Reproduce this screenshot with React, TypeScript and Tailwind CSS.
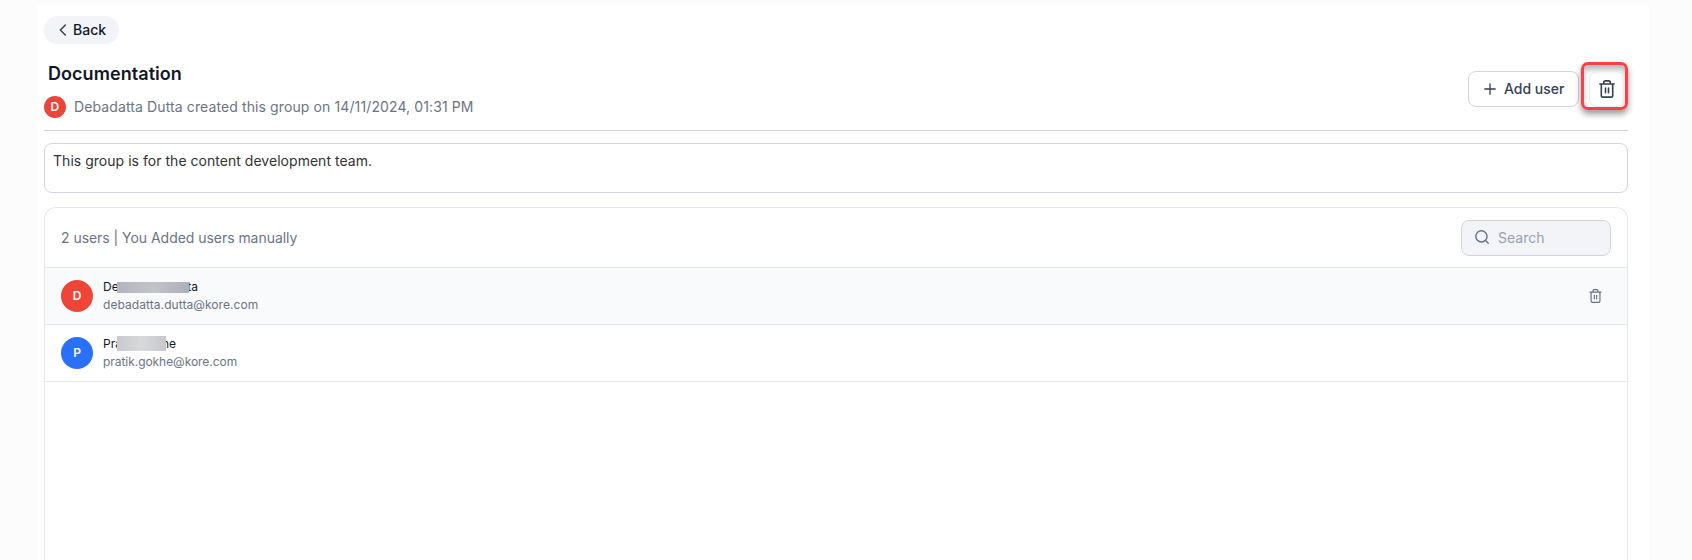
import React from "react";

function Trash({ className }: { className: string }) {
  return (
    <svg viewBox="0 0 16 18" fill="none" stroke="currentColor" strokeLinecap="round" strokeLinejoin="round" className={className}>
      <path d="M0.9 4H15.1M4.7 3.8V2.6Q4.7 0.9 6.4 0.9H9.6Q11.3 0.9 11.3 2.6V3.8M2.3 4V15.4Q2.3 17.1 4 17.1H12Q13.7 17.1 13.7 15.4V4M6.5 8V12.8M9.5 8V12.8" />
    </svg>
  );
}

type User = {
  initial: string;
  color: string;
  head: string;
  tail: string;
  mask: string;
  email: string;
  tracking: string;
  active: boolean;
};

const users: User[] = [
  {
    initial: "D",
    color: "bg-[#f04438]",
    head: "De",
    tail: "ta",
    mask: "left-[14px] top-[4px] w-[72px] h-[11px] bg-linear-to-r from-[#b3b5be] via-[#c3c4c8] to-[#adafb9]",
    email: "debadatta.dutta@kore.com",
    tracking: "tracking-[0.07px]",
    active: true,
  },
  {
    initial: "P",
    color: "bg-[#2970ff]",
    head: "Pra",
    tail: "he",
    mask: "left-[14px] top-px w-[49px] h-[15px] bg-linear-to-r from-[#c9cacd] via-[#d8d9db] to-[#c6c8cc]",
    email: "pratik.gokhe@kore.com",
    tracking: "tracking-[-0.05px]",
    active: false,
  },
];

function Row({ user }: { user: User }) {
  return (
    <div className={`flex h-[57px] items-center border-b border-[#e4e7ec] pr-[25px] pl-4 ${user.active ? "bg-[#f9fafb]" : "bg-white"}`}>
      <div className={`flex size-8 items-center justify-center rounded-full text-[12px] font-semibold text-white ${user.color}`}>
        {user.initial}
      </div>
      <div className="ml-[10px] flex flex-col text-[12px] leading-[18px]">
        <div className={`relative flex justify-between text-[#101828] ${user.active ? "w-[95px]" : "w-[73px]"}`}>
          <span>{user.head}</span>
          <span>{user.tail}</span>
          <span className={`absolute ${user.mask}`} />
        </div>
        <span className={`text-[#6b7483] ${user.tracking}`}>{user.email}</span>
      </div>
      {user.active && <Trash className="ml-auto h-[14px] w-[13px] stroke-[1.5] text-[#667085]" />}
    </div>
  );
}

export default function App() {
  return (
    <div className="h-[560px] overflow-hidden bg-[#fcfcfc] pt-[5px] pr-[43px] pl-[37px] font-['Inter',sans-serif]">
      <main className="flex h-[555px] flex-col bg-white pt-[11px] pr-[21px] pl-[7px]">
        <button className="flex h-7 w-[75px] shrink-0 items-center rounded-full bg-[#f2f4f7] pl-[15px] text-[14px] font-medium text-[#101828]">
          <svg viewBox="0 0 8 12" fill="none" stroke="#344054" strokeWidth="1.5" strokeLinecap="round" strokeLinejoin="round" className="mr-[6px] h-3 w-2">
            <path d="M6.3 1L1.3 6L6.3 11" />
          </svg>
          <span className="pb-px">Back</span>
        </button>

        <header className="flex h-[87px] shrink-0 justify-between border-b border-[#d0d5dd]">
          <div className="pt-[16px]">
            <h1 className="pl-1 text-[18px] leading-[28px] font-semibold tracking-[0.06px] text-[#101828]">Documentation</h1>
            <div className="mt-2 flex h-[22px] items-center text-[14px] tracking-[0.11px] text-[#6b7483]">
              <span className="mr-2 flex size-[22px] items-center justify-center rounded-full bg-[#f04438] text-[12px] font-semibold text-white">D</span>
              <span className="pb-[2px]">Debadatta Dutta created this group on 14/11/2024, 01:31 PM</span>
            </div>
          </div>
          <div className="flex items-start pt-[18px]">
            <button className="mt-[9px] flex h-9 w-[111px] items-center rounded-lg border border-[#d0d5dd] pl-[15px] text-[14px] font-medium text-[#344054]">
              <svg viewBox="0 0 12 12" stroke="currentColor" strokeWidth="1.3" strokeLinecap="round" className="mr-[8px] size-3">
                <path d="M6 .8V11.2M.8 6H11.2" />
              </svg>
              <span className="pb-px">Add user</span>
            </button>
            <div className="ml-[2px] h-12 w-[47px] rounded-[7px] border-[3px] border-[#fb4144] shadow-[0_4px_6px_rgba(0,0,0,0.4)]">
              <div className="h-[42px] w-[41px] rounded-[4px] pt-[6px] pl-[5px] shadow-[inset_0_5px_5px_rgba(0,0,0,0.25)]">
                <button className="flex h-9 w-9 items-center rounded-lg border border-[#e9eaed] pl-[9px] text-[#344054]">
                  <Trash className="h-[18px] w-4 stroke-[1.6]" />
                </button>
              </div>
            </div>
          </div>
        </header>

        <div className="mt-3 h-[50px] shrink-0 rounded-lg border border-[#d0d5dd] px-[8px] pt-[7px] text-[14px] leading-[20px] tracking-[0.03px] text-[#333333]">
          This group is for the content development team.
        </div>

        <section className="mt-[14px] flex-1 overflow-hidden rounded-t-xl border border-b-0 border-[#e4e7ec]">
          <div className="flex h-[60px] items-center justify-between border-b border-[#e4e7ec] pr-4 pl-4 text-[14px]">
            <p className="tracking-[-0.04px] text-[#6b7483]">2 users | You Added users manually</p>
            <div className="flex h-9 w-[150px] items-center rounded-lg border border-[#d0d5dd] bg-[#f2f4f7] pl-[13px] text-[#98a2b3]">
              <svg viewBox="0 0 14 14" fill="none" stroke="#667085" strokeWidth="1.4" strokeLinecap="round" className="mr-[9px] mb-[2px] size-[14px]">
                <circle cx="6.4" cy="6.4" r="5.6" />
                <path d="M10.6 10.6L13.2 13.2" />
              </svg>
              Search
            </div>
          </div>
          {users.map((user) => (
            <Row key={user.email} user={user} />
          ))}
        </section>
      </main>
    </div>
  );
}
